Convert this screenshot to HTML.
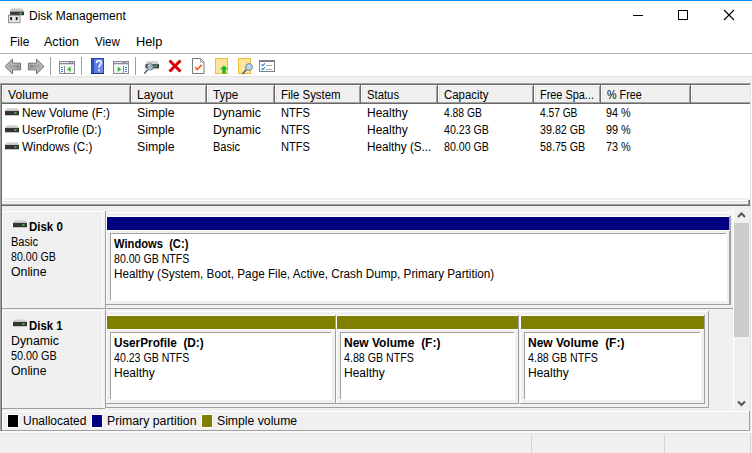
<!DOCTYPE html>
<html><head><meta charset="utf-8">
<style>
*{box-sizing:border-box}
html,body{margin:0;padding:0}
body{width:752px;height:453px;position:relative;overflow:hidden;background:#fff;font-family:"Liberation Sans",sans-serif;font-size:12px;color:#000}
.a{position:absolute}
.t{position:absolute;white-space:pre;line-height:15px}
.b{font-weight:bold}
</style></head><body>
<div class="a" style="left:0px;top:0px;width:752px;height:1px;background:#0a8cf0;"></div>
<svg class="a" style="left:0;top:0" width="30" height="30" viewBox="0 0 30 30">
  <defs><linearGradient id="lid" x1="0" y1="0" x2="0" y2="1"><stop offset="0" stop-color="#e4e4e4"/><stop offset="1" stop-color="#b4b4b4"/></linearGradient></defs>
  <path d="M11.5 8h10.5l2 3.6h-14.2z" fill="url(#lid)"/>
  <rect x="10" y="11.6" width="14" height="3.6" fill="#3a3a3a"/>
  <rect x="19.5" y="12.6" width="2" height="1.8" fill="#38e038"/>
  <rect x="8.5" y="15.3" width="11.5" height="7.4" fill="#e9e9e9" stroke="#8e8e8e"/>
  <rect x="10.2" y="17" width="1.8" height="3.2" fill="#1e1e1e"/>
  <rect x="15.8" y="17" width="1.8" height="3.2" fill="#1e1e1e"/>
</svg>
<div class="t" style="left:29px;top:9px;">Disk Management</div>
<div class="a" style="left:633px;top:15px;width:10px;height:1px;background:#000;"></div>
<div class="a" style="left:678px;top:10px;width:10px;height:10px;background:transparent;border:1px solid #000"></div>
<svg class="a" style="left:723px;top:9px" width="12" height="12" viewBox="0 0 12 12"><path d="M1 1L11 11M11 1L1 11" stroke="#000" stroke-width="1.1"/></svg>
<div class="t" style="left:10px;top:35px;">File</div>
<div class="t" style="left:44px;top:35px;transform:scaleX(1.0455);transform-origin:0 0;">Action</div>
<div class="t" style="left:95px;top:35px;transform:scaleX(0.9615);transform-origin:0 0;">View</div>
<div class="t" style="left:136px;top:35px;transform:scaleX(1.0652);transform-origin:0 0;">Help</div>
<div class="a" style="left:0px;top:53px;width:752px;height:1px;background:#b4b4b4;"></div>
<svg class="a" style="left:0;top:54px" width="290" height="22" viewBox="0 54 290 22">
  <defs>
    <linearGradient id="ga" x1="0" y1="0" x2="0" y2="1"><stop offset="0" stop-color="#c8c8c8"/><stop offset="0.5" stop-color="#9a9a9a"/><stop offset="1" stop-color="#8a8a8a"/></linearGradient>
    <linearGradient id="gh" x1="0" y1="0" x2="1" y2="0"><stop offset="0" stop-color="#2a48b8"/><stop offset="0.25" stop-color="#3a5ccc"/><stop offset="0.3" stop-color="#5a7ee0"/><stop offset="1" stop-color="#4868d4"/></linearGradient>
  </defs>
  <!-- back / forward -->
  <linearGradient id="gl" x1="0" y1="0" x2="1" y2="0"><stop offset="0" stop-color="#b4b4b4"/><stop offset="0.6" stop-color="#a0a0a0"/><stop offset="1" stop-color="#7c7c7c"/></linearGradient>
  <linearGradient id="gr" x1="1" y1="0" x2="0" y2="0"><stop offset="0" stop-color="#b4b4b4"/><stop offset="0.6" stop-color="#a0a0a0"/><stop offset="1" stop-color="#7c7c7c"/></linearGradient>
  <path d="M5 66.5L12.5 59.2V63.2H20.6V69.8H12.5V73.8Z" fill="url(#gl)" stroke="#6c6c6c" stroke-width="1" stroke-linejoin="round"/>
  <path d="M6.6 66.5L11.5 61.7V64.2H19.6V68.8H11.5V71.3Z" fill="none" stroke="#d4d4d4" stroke-width="0.7" stroke-opacity="0.8"/>
  <path d="M44 66.5L36.5 59.2V63.2H28.4V69.8H36.5V73.8Z" fill="url(#gr)" stroke="#6c6c6c" stroke-width="1" stroke-linejoin="round"/>
  <path d="M42.4 66.5L37.5 61.7V64.2H29.4V68.8H37.5V71.3Z" fill="none" stroke="#d4d4d4" stroke-width="0.7" stroke-opacity="0.8"/>
  <!-- separators -->
  <rect x="50" y="57" width="1" height="18" fill="#a0a0a0"/>
  <rect x="81" y="57" width="1" height="18" fill="#a0a0a0"/>
  <rect x="135" y="57" width="1" height="18" fill="#a0a0a0"/>
  <!-- show/hide tree icon -->
  <g transform="translate(59,61)" shape-rendering="crispEdges">
    <rect x="0" y="0" width="16" height="13" fill="#878c94"/>
    <rect x="1" y="4" width="14" height="8" fill="#fff"/>
    <rect x="1" y="1" width="9" height="1" fill="#e4e6ea"/>
    <rect x="12" y="1" width="1" height="1" fill="#e4e6ea"/><rect x="14" y="1" width="1" height="1" fill="#e4e6ea"/>
    <rect x="1" y="3" width="14" height="1" fill="#d4d7dc"/>
    <rect x="5" y="5" width="1" height="7" fill="#878c94"/>
    <rect x="2" y="6" width="2" height="1" fill="#3d7fd8"/><rect x="2" y="8" width="2" height="1" fill="#3d7fd8"/><rect x="2" y="10" width="2" height="1" fill="#3d7fd8"/>
    <rect x="6" y="5" width="9" height="7" fill="#f2f2f2"/>
  </g>
  <path d="M67.2 69.2L70.6 66.4V72Z" fill="#2db82d"/>
  <!-- help -->
  <linearGradient id="hb" x1="0" y1="0" x2="1" y2="0"><stop offset="0" stop-color="#4d70da"/><stop offset="1" stop-color="#7392e8"/></linearGradient>
  <g shape-rendering="crispEdges">
    <rect x="91" y="58" width="13" height="16" fill="#2444b4"/>
    <rect x="91" y="73" width="13" height="1" fill="#182a80"/>
    <rect x="92" y="59" width="11" height="14" fill="url(#hb)"/>
    <rect x="92" y="59" width="2" height="14" fill="#3050c0"/>
  </g>
  <path d="M96.4 63.2C96.4 61.7 97.4 60.8 98.8 60.8C100.3 60.8 101.2 61.7 101.2 63C101.2 64.5 99.5 65.1 99 66.5V67.8" fill="none" stroke="#fff" stroke-width="1.5"/>
  <circle cx="99" cy="70.2" r="1" fill="#fff"/>
  <!-- show/hide action pane -->
  <g transform="translate(113,61)" shape-rendering="crispEdges">
    <rect x="0" y="0" width="16" height="13" fill="#878c94"/>
    <rect x="1" y="4" width="14" height="8" fill="#fff"/>
    <rect x="1" y="1" width="9" height="1" fill="#e4e6ea"/>
    <rect x="12" y="1" width="1" height="1" fill="#e4e6ea"/><rect x="14" y="1" width="1" height="1" fill="#e4e6ea"/>
    <rect x="1" y="3" width="14" height="1" fill="#d4d7dc"/>
    <rect x="10" y="5" width="1" height="7" fill="#878c94"/>
    <rect x="12" y="6" width="2" height="1" fill="#3d7fd8"/><rect x="12" y="8" width="2" height="1" fill="#3d7fd8"/><rect x="12" y="10" width="2" height="1" fill="#3d7fd8"/>
    <rect x="1" y="5" width="9" height="7" fill="#f2f2f2"/>
  </g>
  <path d="M117.8 66.4L121.2 69.2L117.8 72Z" fill="#2db82d"/>
  <!-- connect drive with magnifier -->
  <g>
    <path d="M147 61h10.5l1.5 3.2h-13.5z" fill="#d2d2d2"/>
    <rect x="145.5" y="64.2" width="13.5" height="4" fill="#3c3c3c"/>
    <rect x="145.5" y="68.2" width="13.5" height="1" fill="#b0b0b0"/>
    <rect x="154.6" y="65.4" width="2" height="1.8" fill="#30e030"/>
    <line x1="144.3" y1="73.6" x2="147.6" y2="69.8" stroke="#3c4a5a" stroke-width="1.3"/>
    <circle cx="150.2" cy="66.9" r="3.2" fill="#b4cde6" fill-opacity="0.8" stroke="#56708a" stroke-width="0.9"/>
    <path d="M148.6 65.8a1.8 1.8 0 0 1 1.6-1.3" fill="none" stroke="#fff" stroke-width="0.8"/>
  </g>
  <!-- red X -->
  <path d="M169.5 60.5L180.5 71.5M180.5 60.5L169.5 71.5" stroke="#d80000" stroke-width="3"/>
  <!-- doc check -->
  <path d="M192.5 58.5h8l3.5 3.5v11.5h-11.5z" fill="#fafafa" stroke="#7a7a7a"/>
  <path d="M200.5 58.5v3.5h3.5" fill="none" stroke="#9a9a9a"/>
  <path d="M195 67.3l2.1 2.3l4.6-4.8" fill="none" stroke="#f26522" stroke-width="1.7"/>
  <!-- folder up -->
  <rect x="215.5" y="58.5" width="12" height="15" fill="#fbe49c" stroke="#e8bd3c"/>
  <path d="M224 65.5l4 3.8h-2.3v4.2h-3.4v-4.2h-2.3z" fill="#14b814"/>
  <!-- folder search -->
  <rect x="238.5" y="58.5" width="12" height="15" fill="#fbe49c" stroke="#e8bd3c"/>
  <line x1="242.5" y1="74" x2="246.5" y2="69.5" stroke="#4a5868" stroke-width="1.4"/>
  <circle cx="249" cy="67" r="3.4" fill="#b8d8f0" stroke="#6c87a0" stroke-width="1"/>
  <!-- properties -->
  <rect x="259.5" y="60.5" width="15" height="11" fill="#fff" stroke="#7b8089"/>
  <rect x="259" y="60" width="16" height="2" fill="#7b8089"/>
  <path d="M261.5 64.5l1.2 1.2l2.3-2.4M261.5 68.5l1.2 1.2l2.3-2.4" fill="none" stroke="#2f7fe0" stroke-width="1.2"/>
  <rect x="266" y="65" width="6" height="1" fill="#a8a8a8"/>
  <rect x="266" y="69" width="6" height="1" fill="#a8a8a8"/>
</svg>
<div class="a" style="left:0px;top:76px;width:752px;height:7px;background:#f0f0f0;"></div>
<div class="a" style="left:0px;top:76px;width:752px;height:1px;background:#e2e2e2;"></div>
<div class="a" style="left:0px;top:83px;width:752px;height:1px;background:#a0a0a0;"></div>
<div class="a" style="left:1px;top:84px;width:750px;height:1px;background:#696969;"></div>
<div class="a" style="left:0px;top:83px;width:1px;height:349px;background:#a0a0a0;"></div>
<div class="a" style="left:1px;top:84px;width:1px;height:347px;background:#696969;"></div>
<div class="a" style="left:750px;top:84px;width:1px;height:347px;background:#e3e3e3;"></div>
<div class="a" style="left:751px;top:83px;width:1px;height:349px;background:#fff;"></div>
<div class="a" style="left:2px;top:85px;width:748px;height:19px;background:#f0f0f0;"></div>
<div class="a" style="left:2px;top:85px;width:748px;height:1px;background:#fff;"></div>
<div class="a" style="left:2px;top:102px;width:748px;height:1px;background:#a0a0a0;"></div>
<div class="a" style="left:2px;top:103px;width:748px;height:1px;background:#696969;"></div>
<div class="a" style="left:3px;top:86px;width:747px;height:1px;background:#e6e6e6;"></div>
<div class="a" style="left:2px;top:85px;width:1px;height:17px;background:#fff;"></div>
<div class="a" style="left:3px;top:86px;width:1px;height:16px;background:#e6e6e6;"></div>
<div class="a" style="left:129px;top:86px;width:1px;height:17px;background:#a0a0a0;"></div>
<div class="a" style="left:130px;top:85px;width:1px;height:19px;background:#696969;"></div>
<div class="t" style="left:8px;top:88px;transform:scaleX(1.0125);transform-origin:0 0;">Volume</div>
<div class="a" style="left:131px;top:85px;width:1px;height:17px;background:#fff;"></div>
<div class="a" style="left:132px;top:86px;width:1px;height:16px;background:#e6e6e6;"></div>
<div class="a" style="left:205px;top:86px;width:1px;height:17px;background:#a0a0a0;"></div>
<div class="a" style="left:206px;top:85px;width:1px;height:19px;background:#696969;"></div>
<div class="t" style="left:137px;top:88px;">Layout</div>
<div class="a" style="left:207px;top:85px;width:1px;height:17px;background:#fff;"></div>
<div class="a" style="left:208px;top:86px;width:1px;height:16px;background:#e6e6e6;"></div>
<div class="a" style="left:273px;top:86px;width:1px;height:17px;background:#a0a0a0;"></div>
<div class="a" style="left:274px;top:85px;width:1px;height:19px;background:#696969;"></div>
<div class="t" style="left:213px;top:88px;transform:scaleX(0.9731);transform-origin:0 0;">Type</div>
<div class="a" style="left:275px;top:85px;width:1px;height:17px;background:#fff;"></div>
<div class="a" style="left:276px;top:86px;width:1px;height:16px;background:#e6e6e6;"></div>
<div class="a" style="left:359px;top:86px;width:1px;height:17px;background:#a0a0a0;"></div>
<div class="a" style="left:360px;top:85px;width:1px;height:19px;background:#696969;"></div>
<div class="t" style="left:281px;top:88px;transform:scaleX(0.9508);transform-origin:0 0;">File System</div>
<div class="a" style="left:361px;top:85px;width:1px;height:17px;background:#fff;"></div>
<div class="a" style="left:362px;top:86px;width:1px;height:16px;background:#e6e6e6;"></div>
<div class="a" style="left:436px;top:86px;width:1px;height:17px;background:#a0a0a0;"></div>
<div class="a" style="left:437px;top:85px;width:1px;height:19px;background:#696969;"></div>
<div class="t" style="left:367px;top:88px;transform:scaleX(0.9424);transform-origin:0 0;">Status</div>
<div class="a" style="left:438px;top:85px;width:1px;height:17px;background:#fff;"></div>
<div class="a" style="left:439px;top:86px;width:1px;height:16px;background:#e6e6e6;"></div>
<div class="a" style="left:532px;top:86px;width:1px;height:17px;background:#a0a0a0;"></div>
<div class="a" style="left:533px;top:85px;width:1px;height:19px;background:#696969;"></div>
<div class="t" style="left:444px;top:88px;transform:scaleX(0.9532);transform-origin:0 0;">Capacity</div>
<div class="a" style="left:534px;top:85px;width:1px;height:17px;background:#fff;"></div>
<div class="a" style="left:535px;top:86px;width:1px;height:16px;background:#e6e6e6;"></div>
<div class="a" style="left:599px;top:86px;width:1px;height:17px;background:#a0a0a0;"></div>
<div class="a" style="left:600px;top:85px;width:1px;height:19px;background:#696969;"></div>
<div class="t" style="left:540px;top:88px;transform:scaleX(0.9088);transform-origin:0 0;">Free Spa...</div>
<div class="a" style="left:601px;top:85px;width:1px;height:17px;background:#fff;"></div>
<div class="a" style="left:602px;top:86px;width:1px;height:16px;background:#e6e6e6;"></div>
<div class="a" style="left:689px;top:86px;width:1px;height:17px;background:#a0a0a0;"></div>
<div class="a" style="left:690px;top:85px;width:1px;height:19px;background:#696969;"></div>
<div class="t" style="left:607px;top:88px;transform:scaleX(0.8974);transform-origin:0 0;">% Free</div>
<div class="a" style="left:691px;top:85px;width:1px;height:17px;background:#fff;"></div>
<div class="a" style="left:692px;top:86px;width:1px;height:16px;background:#e6e6e6;"></div>
<svg class="a" style="left:5px;top:108px" width="14" height="8" viewBox="0 0 14 8"><defs><linearGradient id="dl5_108" x1="0" y1="0" x2="0" y2="1"><stop offset="0" stop-color="#e6e6e6"/><stop offset="1" stop-color="#bcbcbc"/></linearGradient></defs><path d="M1.5 0H12.5L14 3H0Z" fill="url(#dl5_108)"/><rect x="0" y="3" width="14" height="4" fill="#343434"/><rect x="9.5" y="4.2" width="2" height="1.6" fill="#2ee02e"/><rect x="0" y="7" width="14" height="1" fill="#c4c4c4"/></svg>
<div class="t" style="left:22px;top:106px;transform:scaleX(0.9852);transform-origin:0 0;">New Volume (F:)</div>
<div class="t" style="left:137px;top:106px;transform:scaleX(1.0229);transform-origin:0 0;">Simple</div>
<div class="t" style="left:213px;top:106px;transform:scaleX(1.0267);transform-origin:0 0;">Dynamic</div>
<div class="t" style="left:281px;top:106px;transform:scaleX(0.9233);transform-origin:0 0;">NTFS</div>
<div class="t" style="left:367px;top:106px;">Healthy</div>
<div class="t" style="left:444px;top:106px;transform:scaleX(0.8614);transform-origin:0 0;">4.88 GB</div>
<div class="t" style="left:540px;top:106px;transform:scaleX(0.8500);transform-origin:0 0;">4.57 GB</div>
<div class="t" style="left:606px;top:106px;transform:scaleX(0.9037);transform-origin:0 0;">94 %</div>
<svg class="a" style="left:5px;top:125px" width="14" height="8" viewBox="0 0 14 8"><defs><linearGradient id="dl5_125" x1="0" y1="0" x2="0" y2="1"><stop offset="0" stop-color="#e6e6e6"/><stop offset="1" stop-color="#bcbcbc"/></linearGradient></defs><path d="M1.5 0H12.5L14 3H0Z" fill="url(#dl5_125)"/><rect x="0" y="3" width="14" height="4" fill="#343434"/><rect x="9.5" y="4.2" width="2" height="1.6" fill="#2ee02e"/><rect x="0" y="7" width="14" height="1" fill="#c4c4c4"/></svg>
<div class="t" style="left:22px;top:123px;transform:scaleX(0.9580);transform-origin:0 0;">UserProfile (D:)</div>
<div class="t" style="left:137px;top:123px;transform:scaleX(1.0229);transform-origin:0 0;">Simple</div>
<div class="t" style="left:213px;top:123px;transform:scaleX(1.0267);transform-origin:0 0;">Dynamic</div>
<div class="t" style="left:281px;top:123px;transform:scaleX(0.9233);transform-origin:0 0;">NTFS</div>
<div class="t" style="left:367px;top:123px;">Healthy</div>
<div class="t" style="left:444px;top:123px;transform:scaleX(0.8860);transform-origin:0 0;">40.23 GB</div>
<div class="t" style="left:540px;top:123px;transform:scaleX(0.8918);transform-origin:0 0;">39.82 GB</div>
<div class="t" style="left:606px;top:123px;transform:scaleX(0.9037);transform-origin:0 0;">99 %</div>
<svg class="a" style="left:5px;top:142px" width="14" height="8" viewBox="0 0 14 8"><defs><linearGradient id="dl5_142" x1="0" y1="0" x2="0" y2="1"><stop offset="0" stop-color="#e6e6e6"/><stop offset="1" stop-color="#bcbcbc"/></linearGradient></defs><path d="M1.5 0H12.5L14 3H0Z" fill="url(#dl5_142)"/><rect x="0" y="3" width="14" height="4" fill="#343434"/><rect x="9.5" y="4.2" width="2" height="1.6" fill="#2ee02e"/><rect x="0" y="7" width="14" height="1" fill="#c4c4c4"/></svg>
<div class="t" style="left:22px;top:140px;transform:scaleX(0.9789);transform-origin:0 0;">Windows (C:)</div>
<div class="t" style="left:137px;top:140px;transform:scaleX(1.0229);transform-origin:0 0;">Simple</div>
<div class="t" style="left:213px;top:140px;transform:scaleX(0.9214);transform-origin:0 0;">Basic</div>
<div class="t" style="left:281px;top:140px;transform:scaleX(0.9233);transform-origin:0 0;">NTFS</div>
<div class="t" style="left:367px;top:140px;transform:scaleX(0.9750);transform-origin:0 0;">Healthy (S...</div>
<div class="t" style="left:444px;top:140px;transform:scaleX(0.8860);transform-origin:0 0;">80.00 GB</div>
<div class="t" style="left:540px;top:140px;transform:scaleX(0.8918);transform-origin:0 0;">58.75 GB</div>
<div class="t" style="left:606px;top:140px;transform:scaleX(0.9037);transform-origin:0 0;">73 %</div>
<div class="a" style="left:2px;top:198px;width:748px;height:6px;background:#f0f0f0;"></div>
<div class="a" style="left:2px;top:198px;width:748px;height:1px;background:#ececec;"></div>
<div class="a" style="left:2px;top:198px;width:1px;height:7px;background:#fff;"></div>
<div class="a" style="left:2px;top:200px;width:747px;height:1px;background:#fff;"></div>
<div class="a" style="left:3px;top:201px;width:745px;height:1px;background:#e3e3e3;"></div>
<div class="a" style="left:2px;top:204px;width:747px;height:1px;background:#a0a0a0;"></div>
<div class="a" style="left:2px;top:205px;width:748px;height:1px;background:#696969;"></div>
<div class="a" style="left:748px;top:200px;width:1px;height:5px;background:#a0a0a0;"></div>
<div class="a" style="left:749px;top:200px;width:1px;height:6px;background:#696969;"></div>
<div class="a" style="left:2px;top:206px;width:748px;height:225px;background:#f0f0f0;"></div>
<div class="a" style="left:2px;top:211px;width:103px;height:1px;background:#fff;"></div>
<div class="a" style="left:2px;top:211px;width:1px;height:97px;background:#fff;"></div>
<div class="a" style="left:102px;top:212px;width:1px;height:96px;background:#fff;"></div>
<div class="a" style="left:2px;top:308px;width:103px;height:1px;background:#a0a0a0;"></div>
<svg class="a" style="left:13px;top:220px" width="14" height="8" viewBox="0 0 14 8"><defs><linearGradient id="dl13_220" x1="0" y1="0" x2="0" y2="1"><stop offset="0" stop-color="#e6e6e6"/><stop offset="1" stop-color="#bcbcbc"/></linearGradient></defs><path d="M1.5 0H12.5L14 3H0Z" fill="url(#dl13_220)"/><rect x="0" y="3" width="14" height="4" fill="#343434"/><rect x="9.5" y="4.2" width="2" height="1.6" fill="#2ee02e"/><rect x="0" y="7" width="14" height="1" fill="#c4c4c4"/></svg>
<div class="t b" style="left:29px;top:220px;transform:scaleX(0.9559);transform-origin:0 0;">Disk 0</div>
<div class="t" style="left:11px;top:235px;transform:scaleX(0.9214);transform-origin:0 0;">Basic</div>
<div class="t" style="left:11px;top:250px;transform:scaleX(0.8860);transform-origin:0 0;">80.00 GB</div>
<div class="t" style="left:11px;top:265px;transform:scaleX(1.0235);transform-origin:0 0;">Online</div>
<div class="a" style="left:106px;top:212px;width:628px;height:1px;background:#fff;"></div>
<div class="a" style="left:105px;top:211px;width:1px;height:98px;background:#a0a0a0;"></div>
<div class="a" style="left:105px;top:308px;width:629px;height:1px;background:#a0a0a0;"></div>
<div class="a" style="left:106px;top:216px;width:624px;height:1px;background:#fff;"></div>
<div class="a" style="left:106px;top:216px;width:1px;height:88px;background:#fff;"></div>
<div class="a" style="left:730px;top:216px;width:1px;height:89px;background:#a0a0a0;"></div>
<div class="a" style="left:106px;top:304px;width:625px;height:1px;background:#a0a0a0;"></div>
<div class="a" style="left:107px;top:217px;width:623px;height:13px;background:#000080;"></div>
<div class="a" style="left:729px;top:216px;width:1px;height:88px;background:#a0a0a0;"></div>
<div class="a" style="left:107px;top:230px;width:623px;height:1px;background:#fff;"></div>
<div class="a" style="left:110px;top:233px;width:617px;height:68px;background:#fff;"></div>
<div class="a" style="left:110px;top:233px;width:616px;height:1px;background:#a0a0a0;"></div>
<div class="a" style="left:110px;top:233px;width:1px;height:67px;background:#a0a0a0;"></div>
<div class="t b" style="left:114px;top:237px;transform:scaleX(0.9313);transform-origin:0 0;">Windows  (C:)</div>
<div class="t" style="left:114px;top:252px;transform:scaleX(0.8824);transform-origin:0 0;">80.00 GB NTFS</div>
<div class="t" style="left:114px;top:267px;transform:scaleX(0.9780);transform-origin:0 0;">Healthy (System, Boot, Page File, Active, Crash Dump, Primary Partition)</div>
<div class="a" style="left:2px;top:310px;width:103px;height:1px;background:#fff;"></div>
<div class="a" style="left:2px;top:310px;width:1px;height:97px;background:#fff;"></div>
<div class="a" style="left:102px;top:311px;width:1px;height:96px;background:#fff;"></div>
<div class="a" style="left:2px;top:408px;width:103px;height:1px;background:#a0a0a0;"></div>
<svg class="a" style="left:13px;top:319px" width="14" height="8" viewBox="0 0 14 8"><defs><linearGradient id="dl13_319" x1="0" y1="0" x2="0" y2="1"><stop offset="0" stop-color="#e6e6e6"/><stop offset="1" stop-color="#bcbcbc"/></linearGradient></defs><path d="M1.5 0H12.5L14 3H0Z" fill="url(#dl13_319)"/><rect x="0" y="3" width="14" height="4" fill="#343434"/><rect x="9.5" y="4.2" width="2" height="1.6" fill="#2ee02e"/><rect x="0" y="7" width="14" height="1" fill="#c4c4c4"/></svg>
<div class="t b" style="left:29px;top:319px;transform:scaleX(0.9500);transform-origin:0 0;">Disk 1</div>
<div class="t" style="left:11px;top:334px;transform:scaleX(1.0267);transform-origin:0 0;">Dynamic</div>
<div class="t" style="left:11px;top:349px;transform:scaleX(0.9020);transform-origin:0 0;">50.00 GB</div>
<div class="t" style="left:11px;top:364px;transform:scaleX(1.0235);transform-origin:0 0;">Online</div>
<div class="a" style="left:106px;top:311px;width:603px;height:1px;background:#fff;"></div>
<div class="a" style="left:105px;top:310px;width:1px;height:98px;background:#a0a0a0;"></div>
<div class="a" style="left:105px;top:407px;width:604px;height:1px;background:#a0a0a0;"></div>
<div class="a" style="left:708px;top:311px;width:1px;height:96px;background:#a0a0a0;"></div>
<div class="a" style="left:106px;top:315px;width:229px;height:1px;background:#fff;"></div>
<div class="a" style="left:106px;top:315px;width:1px;height:88px;background:#fff;"></div>
<div class="a" style="left:335px;top:315px;width:1px;height:89px;background:#a0a0a0;"></div>
<div class="a" style="left:106px;top:403px;width:230px;height:1px;background:#a0a0a0;"></div>
<div class="a" style="left:107px;top:316px;width:228px;height:13px;background:#808000;"></div>
<div class="a" style="left:107px;top:329px;width:228px;height:1px;background:#fff;"></div>
<div class="a" style="left:110px;top:332px;width:222px;height:68px;background:#fff;"></div>
<div class="a" style="left:110px;top:332px;width:221px;height:1px;background:#a0a0a0;"></div>
<div class="a" style="left:110px;top:332px;width:1px;height:67px;background:#a0a0a0;"></div>
<div class="t b" style="left:114px;top:336px;transform:scaleX(0.9822);transform-origin:0 0;">UserProfile  (D:)</div>
<div class="t" style="left:114px;top:351px;transform:scaleX(0.8824);transform-origin:0 0;">40.23 GB NTFS</div>
<div class="t" style="left:114px;top:366px;">Healthy</div>
<div class="a" style="left:336px;top:315px;width:182px;height:1px;background:#fff;"></div>
<div class="a" style="left:336px;top:315px;width:1px;height:88px;background:#fff;"></div>
<div class="a" style="left:518px;top:315px;width:1px;height:89px;background:#a0a0a0;"></div>
<div class="a" style="left:336px;top:403px;width:183px;height:1px;background:#a0a0a0;"></div>
<div class="a" style="left:337px;top:316px;width:181px;height:13px;background:#808000;"></div>
<div class="a" style="left:337px;top:329px;width:181px;height:1px;background:#fff;"></div>
<div class="a" style="left:340px;top:332px;width:175px;height:68px;background:#fff;"></div>
<div class="a" style="left:340px;top:332px;width:174px;height:1px;background:#a0a0a0;"></div>
<div class="a" style="left:340px;top:332px;width:1px;height:67px;background:#a0a0a0;"></div>
<div class="t b" style="left:344px;top:336px;">New Volume  (F:)</div>
<div class="t" style="left:344px;top:351px;transform:scaleX(0.8872);transform-origin:0 0;">4.88 GB NTFS</div>
<div class="t" style="left:344px;top:366px;">Healthy</div>
<div class="a" style="left:520px;top:315px;width:184px;height:1px;background:#fff;"></div>
<div class="a" style="left:520px;top:315px;width:1px;height:88px;background:#fff;"></div>
<div class="a" style="left:704px;top:315px;width:1px;height:89px;background:#a0a0a0;"></div>
<div class="a" style="left:520px;top:403px;width:185px;height:1px;background:#a0a0a0;"></div>
<div class="a" style="left:521px;top:316px;width:183px;height:13px;background:#808000;"></div>
<div class="a" style="left:521px;top:329px;width:183px;height:1px;background:#fff;"></div>
<div class="a" style="left:524px;top:332px;width:177px;height:68px;background:#fff;"></div>
<div class="a" style="left:524px;top:332px;width:176px;height:1px;background:#a0a0a0;"></div>
<div class="a" style="left:524px;top:332px;width:1px;height:67px;background:#a0a0a0;"></div>
<div class="t b" style="left:528px;top:336px;">New Volume  (F:)</div>
<div class="t" style="left:528px;top:351px;transform:scaleX(0.8872);transform-origin:0 0;">4.88 GB NTFS</div>
<div class="t" style="left:528px;top:366px;">Healthy</div>
<div class="a" style="left:733px;top:206px;width:17px;height:205px;background:#f0f0f0;"></div>
<div class="a" style="left:733px;top:206px;width:1px;height:205px;background:#fff;"></div>
<div class="a" style="left:734px;top:223px;width:15px;height:114px;background:#cdcdcd;"></div>
<svg class="a" style="left:737px;top:211px" width="9" height="7" viewBox="0 0 9 7"><path d="M1 6L4.5 2.5L8 6" fill="none" stroke="#555" stroke-width="2"/></svg>
<svg class="a" style="left:737px;top:400px" width="9" height="7" viewBox="0 0 9 7"><path d="M1 1.5L4.5 5L8 1.5" fill="none" stroke="#555" stroke-width="2"/></svg>
<div class="a" style="left:2px;top:411px;width:748px;height:1px;background:#fff;"></div>
<div class="a" style="left:2px;top:411px;width:1px;height:20px;background:#fff;"></div>
<div class="a" style="left:749px;top:411px;width:1px;height:20px;background:#a0a0a0;"></div>
<div class="a" style="left:2px;top:430px;width:748px;height:1px;background:#a0a0a0;"></div>
<div class="a" style="left:7px;top:414px;width:12px;height:14px;background:#fff;"></div>
<div class="a" style="left:8px;top:415px;width:10px;height:12px;background:#000;"></div>
<div class="t" style="left:23px;top:414px;">Unallocated</div>
<div class="a" style="left:91px;top:414px;width:12px;height:14px;background:#fff;"></div>
<div class="a" style="left:92px;top:415px;width:10px;height:12px;background:#000080;"></div>
<div class="t" style="left:107px;top:414px;transform:scaleX(1.0244);transform-origin:0 0;">Primary partition</div>
<div class="a" style="left:201px;top:414px;width:12px;height:14px;background:#fff;"></div>
<div class="a" style="left:202px;top:415px;width:10px;height:12px;background:#808000;"></div>
<div class="t" style="left:217px;top:414px;transform:scaleX(1.0182);transform-origin:0 0;">Simple volume</div>
<div class="a" style="left:0px;top:431px;width:752px;height:1px;background:#fafafa;"></div>
<div class="a" style="left:0px;top:432px;width:752px;height:1px;background:#fff;"></div>
<div class="a" style="left:0px;top:433px;width:752px;height:20px;background:#f0f0f0;"></div>
<div class="a" style="left:0px;top:433px;width:752px;height:1px;background:#e3e3e3;"></div>
<div class="a" style="left:531px;top:435px;width:1px;height:18px;background:#d4d4d4;"></div>
<div class="a" style="left:664px;top:435px;width:1px;height:18px;background:#d4d4d4;"></div>
<div class="a" style="left:750px;top:435px;width:1px;height:18px;background:#d4d4d4;"></div>
</body></html>
